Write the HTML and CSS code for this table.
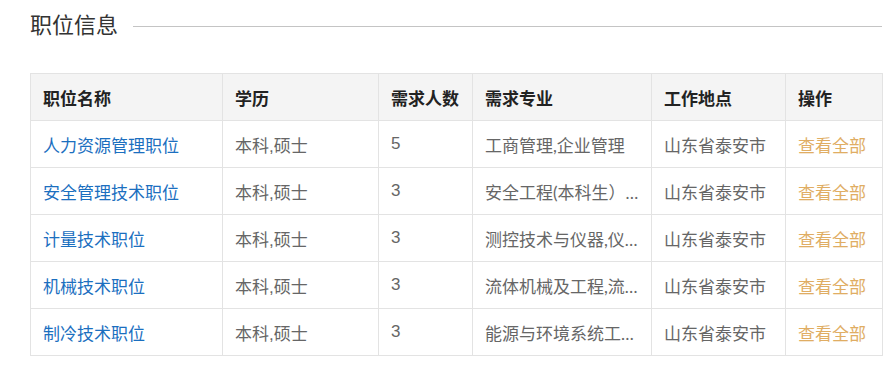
FILE: index.html
```html
<!DOCTYPE html>
<html lang="zh-CN">
<head>
<meta charset="utf-8">
<link rel="stylesheet" href="styles.css">
</head>
<body>
<div class="page">
  <div class="title-row">
    <h2 class="title">职位信息</h2>
    <div class="title-line"></div>
  </div>
  <table class="jobs">
    <colgroup>
      <col class="c1"><col class="c2"><col class="c3"><col class="c4"><col class="c5"><col class="c6">
    </colgroup>
    <thead>
      <tr><th>职位名称</th><th>学历</th><th>需求人数</th><th>需求专业</th><th>工作地点</th><th>操作</th></tr>
    </thead>
    <tbody>
      <tr><td><a class="job">人力资源管理职位</a></td><td>本科,硕士</td><td>5</td><td class="major">工商管理,企业管理</td><td>山东省泰安市</td><td><a class="more">查看全部</a></td></tr>
      <tr><td><a class="job">安全管理技术职位</a></td><td>本科,硕士</td><td>3</td><td class="major">安全工程(本科生）安全科学与工程</td><td>山东省泰安市</td><td><a class="more">查看全部</a></td></tr>
      <tr><td><a class="job">计量技术职位</a></td><td>本科,硕士</td><td>3</td><td class="major">测控技术与仪器,仪器科学与技术</td><td>山东省泰安市</td><td><a class="more">查看全部</a></td></tr>
      <tr><td><a class="job">机械技术职位</a></td><td>本科,硕士</td><td>3</td><td class="major">流体机械及工程,流体机械</td><td>山东省泰安市</td><td><a class="more">查看全部</a></td></tr>
      <tr><td><a class="job">制冷技术职位</a></td><td>本科,硕士</td><td>3</td><td class="major">能源与环境系统工程,制冷</td><td>山东省泰安市</td><td><a class="more">查看全部</a></td></tr>
    </tbody>
  </table>
</div>
</body>
</html>
```
FILE: styles.css
```css
html, body {
  margin: 0;
  padding: 0;
  background: #fff;
}
body {
  font-family: "Liberation Sans", "Noto Sans CJK SC", sans-serif;
}
.page {
  padding: 0 14px 0 30px;
}
.title-row {
  display: flex;
  align-items: center;
  height: 52px;
  gap: 15px;
}
.title {
  margin: 0;
  font-size: 22px;
  font-weight: normal;
  color: #333;
  line-height: 30px;
}
.title-line {
  flex: 1;
  height: 1px;
  background: #c4c4c4;
}
.jobs {
  margin-top: 21px;
  width: 852px;
  table-layout: fixed;
  border-collapse: collapse;
  font-size: 17px;
}
.c1 { width: 192px; }
.c2 { width: 156px; }
.c3 { width: 94px; }
.c4 { width: 179px; }
.c5 { width: 134px; }
.c6 { width: 97px; }
.jobs th, .jobs td {
  border: 1px solid #e3e3e3;
  height: 46px;
  padding: 0 12px;
  text-align: left;
  white-space: nowrap;
  overflow: hidden;
  text-overflow: ellipsis;
}
.jobs th {
  background: #f4f4f4;
  color: #222;
  font-weight: bold;
}
.jobs td {
  color: #666;
}
.jobs td.major {
  font-family: Lato, "Noto Sans CJK SC", sans-serif;
}
.job {
  color: #1b6fbf;
  text-decoration: none;
}
.more {
  color: #e0ad63;
  text-decoration: none;
}
```
